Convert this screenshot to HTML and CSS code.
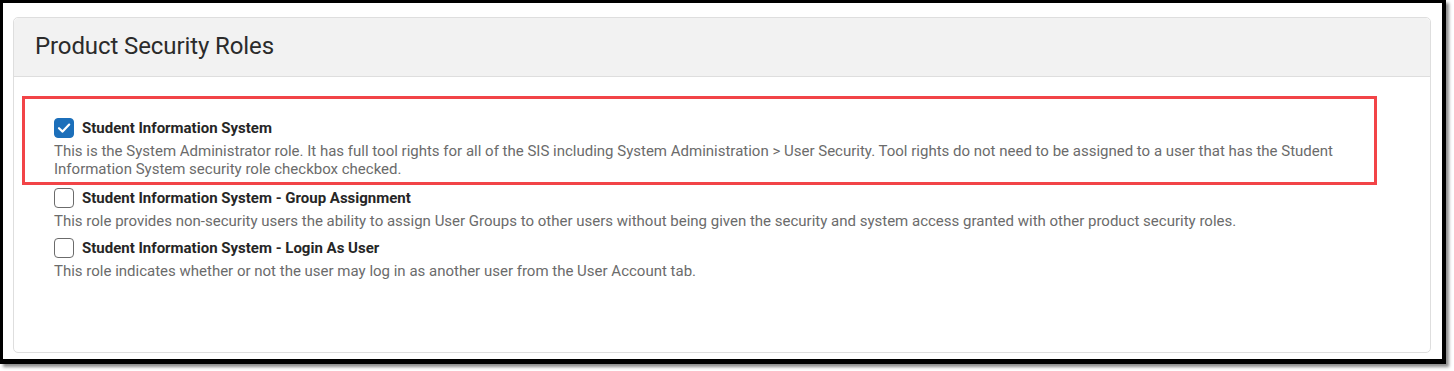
FILE: index.html
```html
<!DOCTYPE html>
<html lang="en">
<head>
<meta charset="utf-8">
<title>Product Security Roles</title>
<link rel="stylesheet" href="styles.css">
</head>
<body>
<div class="frame">
  <section class="card">
    <header class="card-header">
      <h1 class="card-title">Product Security Roles</h1>
    </header>
    <div class="card-body">
      <div class="role role-highlighted">
        <label class="role-row">
          <span class="checkbox checked">
            <svg viewBox="0 0 20 20" width="20" height="20" aria-hidden="true"><path d="M5 10.2 L8.6 13.6 L15.2 6.6" fill="none" stroke="#fff" stroke-width="2.2" stroke-linecap="round" stroke-linejoin="round"/></svg>
          </span>
          <span class="role-name">Student Information System</span>
        </label>
        <p class="role-desc">This is the System Administrator role. It has full tool rights for all of the SIS including System Administration &gt; User Security. Tool rights do not need to be assigned to a user that has the Student Information System security role checkbox checked.</p>
      </div>
      <div class="role">
        <label class="role-row">
          <span class="checkbox"></span>
          <span class="role-name">Student Information System - Group Assignment</span>
        </label>
        <p class="role-desc">This role provides non-security users the ability to assign User Groups to other users without being given the security and system access granted with other product security roles.</p>
      </div>
      <div class="role">
        <label class="role-row">
          <span class="checkbox"></span>
          <span class="role-name">Student Information System - Login As User</span>
        </label>
        <p class="role-desc">This role indicates whether or not the user may log in as another user from the User Account tab.</p>
      </div>
      <div class="annotation"></div>
    </div>
  </section>
</div>
</body>
</html>
```

FILE: styles.css
```css
* { box-sizing: border-box; }

html, body {
  margin: 0;
  padding: 0;
  background: #fff;
}

body {
  font-family: Roboto, "Noto Sans", "Liberation Sans", sans-serif;
  width: 1454px;
  height: 371px;
  overflow: hidden;
}

.frame {
  width: 1446px;
  height: 364px;
  border-style: solid;
  border-color: #000;
  border-width: 3px 4px 5px 3px;
  box-shadow: 3px 3px 3px rgba(0, 0, 0, 0.45);
  background: #fff;
  display: flex;
  flex-direction: column;
  padding: 14px 11px 6px 10px;
}

.card {
  flex: 1;
  border: 1px solid #dedede;
  border-radius: 5px;
  display: flex;
  flex-direction: column;
  background: #fff;
}

.card-header {
  background: #f2f2f2;
  border-bottom: 1px solid #dedede;
  border-radius: 5px 5px 0 0;
  padding: 14px 21px 16px;
}

.card-title {
  margin: 0;
  font-size: 24px;
  line-height: 28px;
  font-weight: 400;
  color: #2b2b2b;
  letter-spacing: -0.1px;
}

.card-body {
  position: relative;
  flex: 1;
  padding: 41px 40px 0 40px;
}

.role {
  margin-bottom: 8px;
}

.role-highlighted {
  margin-bottom: 10px;
}

.role-row {
  display: flex;
  align-items: center;
  gap: 8px;
  height: 20px;
}

.checkbox {
  width: 20px;
  height: 20px;
  border: 1.5px solid #6b6b6b;
  border-radius: 4px;
  background: #fff;
  flex: none;
  display: flex;
  align-items: center;
  justify-content: center;
}

.checkbox.checked {
  background: #1c6fba;
  border-color: #1c6fba;
}

.checkbox svg {
  display: block;
  flex: none;
}

.role-name {
  font-size: 15px;
  font-weight: 700;
  color: #262626;
  line-height: 20px;
}

.role-desc {
  margin: 4px 0 0 0;
  font-size: 15px;
  line-height: 18px;
  color: #6b6b6b;
}

.annotation {
  position: absolute;
  left: 8px;
  top: 19px;
  width: 1355px;
  height: 89px;
  border: 3px solid #f24447;
  pointer-events: none;
}
```
